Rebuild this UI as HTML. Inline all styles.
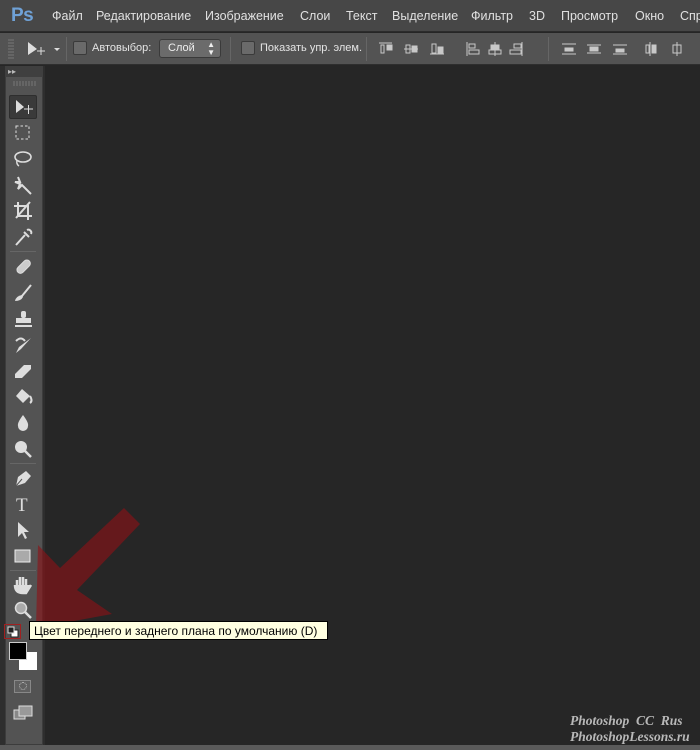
<!DOCTYPE html>
<html><head><meta charset="utf-8"><style>
*{margin:0;padding:0;box-sizing:border-box}
body{width:700px;height:750px;background:#262626;position:relative;overflow:hidden;font-family:"Liberation Sans","DejaVu Sans",sans-serif;}
#menu{position:absolute;left:0;top:0;width:700px;height:32px;background:#474747;border-bottom:1px solid #2c2c2c}
#menu span{position:absolute;top:9px;font-size:12.5px;color:#e0e0e0;white-space:nowrap}
#ps{position:absolute;left:11px;top:5px;font-size:19px;font-weight:bold;color:#6fa1d6;letter-spacing:-0.5px}
#opts{position:absolute;left:0;top:33px;width:700px;height:32px;background:#535353;border-bottom:1px solid #2e2e2e}
.sep{position:absolute;top:4px;width:1px;height:24px;background:#3e3e3e;border-right:1px solid #666}
.cb{position:absolute;top:8px;width:14px;height:14px;background:#6a6a6a;border:1px solid #3a3a3a;border-radius:2px}
.ol{position:absolute;top:9px;font-size:11px;color:#e4e4e4;white-space:nowrap}
#sel{position:absolute;left:159px;top:6px;width:62px;height:19px;background:#6b6b6b;border:1px solid #3a3a3a;border-radius:3px;font-size:11px;color:#eee;padding:2px 0 0 8px}
#left{position:absolute;left:0;top:66px;width:45px;height:684px;background:#2e2e2e}
#panel{position:absolute;left:5px;top:66px;width:38px;height:679px;background:#535353;border:1px solid #3c3c3c}
#ph{position:absolute;left:5px;top:66px;width:38px;height:11px;background:#3f3f3f;color:#bbb;font-size:8px;padding-left:3px;line-height:11px}
.t{position:absolute;left:9px;width:28px;height:24px}
.t svg{position:absolute;left:4px;top:2px}
.ts{position:absolute;left:10px;width:26px;height:1px;background:#3c3c3c;border-bottom:1px solid #666}
#tip{position:absolute;left:29px;top:621px;width:299px;height:19px;background:#ffffe1;border:1px solid #000;font-size:12px;color:#000;padding:2px 0 0 4px;white-space:nowrap}
#wm{position:absolute;left:570px;top:713px;font-family:"Liberation Serif",serif;font-style:italic;font-weight:bold;font-size:13.5px;color:#b8b8b8;line-height:16px;white-space:nowrap}
#bot{position:absolute;left:0;top:745px;width:700px;height:5px;background:#5a5a5a}
</style></head><body>
<div id="menu">
<div id="ps">Ps</div>
<span style="left:52px">Файл</span><span style="left:96px">Редактирование</span><span style="left:205px">Изображение</span><span style="left:300px">Слои</span><span style="left:346px">Текст</span><span style="left:392px">Выделение</span><span style="left:471px">Фильтр</span><span style="left:529px">3D</span><span style="left:561px">Просмотр</span><span style="left:635px">Окно</span><span style="left:680px">Спр</span>
</div>
<div id="opts">
<svg style="position:absolute;left:8px;top:5px" width="6" height="22"><g stroke="#777" stroke-width="1"><line x1="0" y1="2" x2="6" y2="2"/><line x1="0" y1="5" x2="6" y2="5"/><line x1="0" y1="8" x2="6" y2="8"/><line x1="0" y1="11" x2="6" y2="11"/><line x1="0" y1="14" x2="6" y2="14"/><line x1="0" y1="17" x2="6" y2="17"/><line x1="0" y1="20" x2="6" y2="20"/></g></svg>
<svg style="position:absolute;left:27px;top:8px" width="36" height="16"><path d="M1 1 L1 14 L10 8 Z" fill="#ddd"/><g stroke="#ddd"><line x1="10" y1="10" x2="18" y2="10"/><line x1="14" y1="6" x2="14" y2="14"/></g><path d="M27 7 L33 7 L30 10Z" fill="#ddd"/></svg>
<div class="sep" style="left:66px"></div>
<div class="cb" style="left:73px"></div><div class="ol" style="left:92px">Автовыбор:</div>
<div id="sel">Слой<span style="position:absolute;right:5px;top:1px;font-size:8px;line-height:8px">▲<br>▼</span></div>
<div class="sep" style="left:230px"></div>
<div class="cb" style="left:241px"></div><div class="ol" style="left:260px">Показать упр. элем.</div>
<div class="sep" style="left:366px"></div>
<svg style="position:absolute;left:378px;top:7px" width="322" height="18"><g fill="#c8c8c8" stroke="#c8c8c8" stroke-width="1">
<line x1="1" y1="3" x2="14" y2="3"/><rect x="3" y="5" width="3" height="8" fill="none"/><rect x="9" y="5" width="5" height="5"/>
<line x1="26" y1="9" x2="40" y2="9"/><rect x="28" y="5" width="4" height="8" fill="none"/><rect x="34" y="6" width="5" height="6"/>
<line x1="52" y1="14" x2="66" y2="14"/><rect x="54" y="4" width="4" height="9" fill="none"/><rect x="60" y="7" width="5" height="6"/>
<line x1="89" y1="2" x2="89" y2="16"/><rect x="91" y="4" width="6" height="4" fill="none"/><rect x="91" y="10" width="10" height="4" fill="none"/>
<line x1="117" y1="2" x2="117" y2="16"/><rect x="113" y="5" width="8" height="4"/><rect x="111" y="10" width="12" height="4" fill="none"/>
<line x1="144" y1="2" x2="144" y2="16"/><rect x="136" y="4" width="7" height="4" fill="none"/><rect x="132" y="10" width="11" height="4" fill="none"/>
<line x1="184" y1="4" x2="198" y2="4"/><line x1="184" y1="14" x2="198" y2="14"/><rect x="187" y="8" width="8" height="3"/>
<line x1="209" y1="5" x2="223" y2="5"/><line x1="209" y1="13" x2="223" y2="13"/><rect x="212" y="7" width="8" height="4"/>
<line x1="235" y1="5" x2="249" y2="5"/><line x1="235" y1="14" x2="249" y2="14"/><rect x="238" y="9" width="8" height="3"/>
<line x1="272" y1="2" x2="272" y2="16"/><rect x="274" y="5" width="4" height="8"/><rect x="268" y="5" width="3" height="8" fill="none"/>
<line x1="299" y1="2" x2="299" y2="16"/><rect x="295" y="5" width="8" height="8" fill="none"/>
</g></svg>
<div class="sep" style="left:548px"></div>
</div>
<div id="left"></div>
<div id="panel"></div>
<div id="ph">▸▸</div>
<svg style="position:absolute;left:13px;top:81px" width="24" height="5"><g stroke="#777"><line x1="1" y1="0" x2="1" y2="5"/><line x1="4" y1="0" x2="4" y2="5"/><line x1="7" y1="0" x2="7" y2="5"/><line x1="10" y1="0" x2="10" y2="5"/><line x1="13" y1="0" x2="13" y2="5"/><line x1="16" y1="0" x2="16" y2="5"/><line x1="19" y1="0" x2="19" y2="5"/><line x1="22" y1="0" x2="22" y2="5"/></g></svg>
<div class="t" style="top:95px;background:#3a3a3a;border:1px solid #2e2e2e;border-radius:2px"><svg width="22" height="18"><path d="M2 2 L2 15 L10 9Z" fill="#ddd"/><g stroke="#ddd"><line x1="10" y1="11" x2="19" y2="11"/><line x1="14.5" y1="7" x2="14.5" y2="16"/></g></svg></div>
<div class="t" style="top:121px"><svg width="22" height="20"><rect x="3" y="3" width="13" height="13" fill="none" stroke="#ddd" stroke-dasharray="2.5 2"/></svg></div>
<div class="t" style="top:147px"><svg width="22" height="20"><ellipse cx="10" cy="8" rx="8" ry="5" fill="none" stroke="#ddd" stroke-width="1.6"/><path d="M4 11 Q3 15 6 17" stroke="#ddd" fill="none" stroke-width="1.4"/></svg></div>
<div class="t" style="top:173px"><svg width="22" height="20"><path d="M5 2 L7 7 L2 7 L7 9 L5 14 L9 10 L18 19" stroke="#ddd" stroke-width="2" fill="none"/></svg></div>
<div class="t" style="top:199px"><svg width="22" height="20"><path d="M5 1 V15 H19 M1 5 H15 V19 M17 1 L3 17" stroke="#ddd" stroke-width="2" fill="none"/></svg></div>
<div class="t" style="top:225px"><svg width="22" height="20"><path d="M3 18 L12 8 M11 5 L16 10 M14 3 A3 3 0 0 1 18 7" stroke="#ddd" stroke-width="2" fill="none"/></svg></div>
<div class="ts" style="top:251px"></div>
<div class="t" style="top:255px"><svg width="22" height="20"><rect x="3" y="6" width="16" height="7" rx="3.5" transform="rotate(-45 11 10)" fill="#ccc" stroke="#ddd"/></svg></div>
<div class="t" style="top:281px"><svg width="22" height="20"><path d="M18 2 L9 13" stroke="#ddd" stroke-width="2"/><path d="M9 12 Q3 13 2 18 Q8 18 10 14Z" fill="#ddd"/></svg></div>
<div class="t" style="top:307px"><svg width="22" height="20"><rect x="8" y="2" width="5" height="7" rx="2" fill="#ddd"/><rect x="3" y="9" width="15" height="5" fill="#ddd"/><rect x="2" y="16" width="17" height="2" fill="#ddd"/></svg></div>
<div class="t" style="top:333px"><svg width="22" height="20"><path d="M3 6 Q8 1 12 6" stroke="#ddd" stroke-width="2" fill="none"/><path d="M18 3 L8 14 L3 18 L6 12Z" fill="#ddd"/></svg></div>
<div class="t" style="top:359px"><svg width="22" height="20"><path d="M2 13 L11 4 L18 4 L18 8 L9 17 L2 17Z" fill="#ddd"/></svg></div>
<div class="t" style="top:385px"><svg width="22" height="20"><path d="M9 2 L3 9 L10 16 L17 9Z" fill="#ddd"/><path d="M17 9 Q20 14 17 16" stroke="#ddd" fill="none" stroke-width="2"/></svg></div>
<div class="t" style="top:411px"><svg width="22" height="20"><path d="M10 2 Q4 10 5 13 A5 5 0 0 0 15 13 Q16 10 10 2Z" fill="#ddd"/></svg></div>
<div class="t" style="top:437px"><svg width="22" height="20"><circle cx="8" cy="8" r="6" fill="#ddd"/><path d="M12 12 L18 18" stroke="#ddd" stroke-width="2.5"/></svg></div>
<div class="ts" style="top:463px"></div>
<div class="t" style="top:466px"><svg width="22" height="20"><path d="M3 18 L5 9 L13 3 L18 8 L12 15Z" fill="#ddd"/><path d="M3 18 L9 11" stroke="#555"/></svg></div>
<div class="t" style="top:492px"><svg width="22" height="22"><text x="3" y="17" font-family="Liberation Serif,serif" font-size="19" fill="#ddd">T</text></svg></div>
<div class="t" style="top:518px"><svg width="22" height="20"><path d="M5 2 L5 17 L9 13 L12 19 L14 18 L11 12 L16 12Z" fill="#ddd"/></svg></div>
<div class="t" style="top:544px"><svg width="22" height="20"><rect x="2" y="4" width="15" height="12" fill="#aaa" stroke="#eee"/></svg></div>
<div class="ts" style="top:570px"></div>
<div class="t" style="top:573px"><svg width="22" height="20"><path d="M4 10 L4 5 M7 10 L7 2 M10 10 L10 2 M13 10 L13 4 M2 10 Q2 18 10 18 L13 18 L18 10" stroke="#ddd" stroke-width="2.5" fill="#ddd"/></svg></div>
<div class="t" style="top:598px"><svg width="22" height="20"><circle cx="8" cy="8" r="5.5" fill="#aaa" stroke="#ddd" stroke-width="1.5"/><path d="M12 12 L18 18" stroke="#ddd" stroke-width="2.5"/></svg></div>
<svg style="position:absolute;left:0;top:500px" width="160" height="150"><polygon points="36,128 38,45 60,68 124,8 140,24 77,90 112,114" fill="rgba(140,18,22,0.62)"/></svg>
<div style="position:absolute;left:4px;top:624px;width:17px;height:15px;border:1px solid #a02020"></div>
<svg style="position:absolute;left:7px;top:626px" width="12" height="12"><rect x="4" y="4" width="7" height="7" fill="#fff" stroke="#222"/><rect x="1" y="1" width="6" height="6" fill="#222" stroke="#ddd"/></svg>
<div id="tip">Цвет переднего и заднего плана по умолчанию (D)</div>
<div style="position:absolute;left:19px;top:652px;width:18px;height:18px;background:#fff"></div>
<div style="position:absolute;left:9px;top:642px;width:18px;height:18px;background:#000;border:1px solid #ccc"></div>
<div style="position:absolute;left:14px;top:680px;width:17px;height:13px;border:1px solid #888;background:#606060"></div>
<div style="position:absolute;left:19px;top:682px;width:8px;height:8px;border:1px dotted #bbb;border-radius:50%"></div>
<svg style="position:absolute;left:13px;top:705px" width="22" height="16"><rect x="1" y="5" width="11" height="9" fill="#888" stroke="#ddd"/><rect x="6" y="1" width="13" height="10" fill="#999" stroke="#ddd"/></svg>
<div id="wm">Photoshop &nbsp;CC &nbsp;Rus<br>PhotoshopLessons.ru</div>
<div id="bot"></div>
</body></html>
